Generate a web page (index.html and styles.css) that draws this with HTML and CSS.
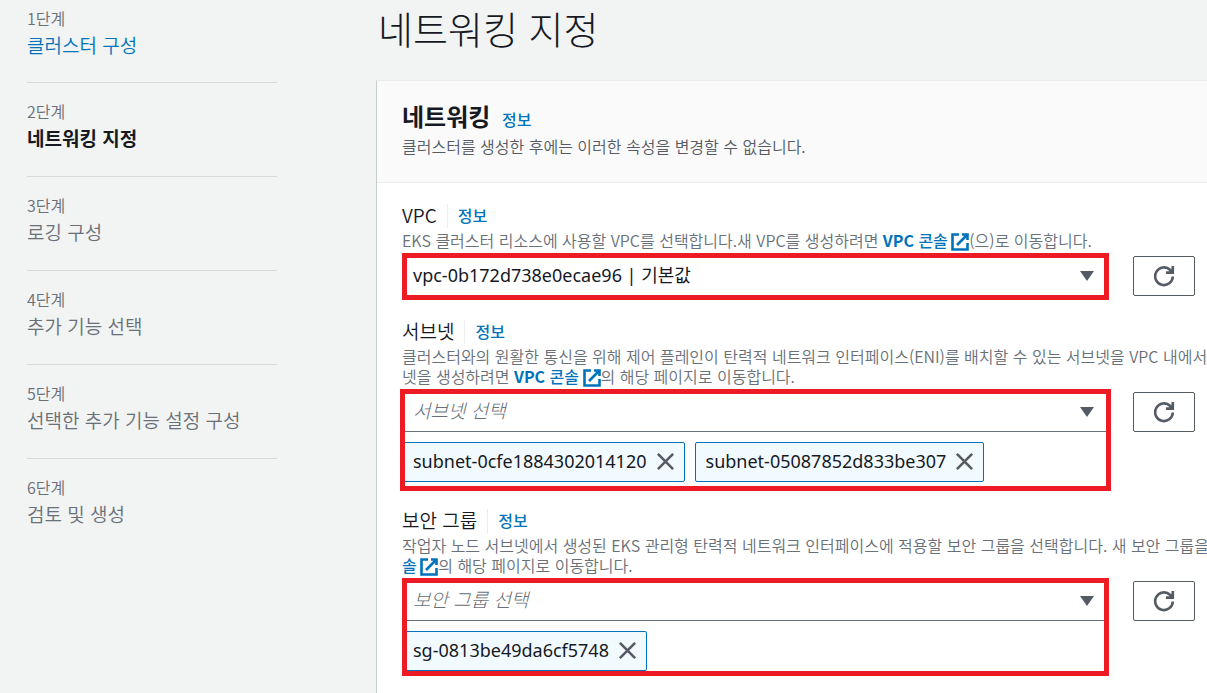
FILE: index.html
```html
<!DOCTYPE html>
<html lang="ko">
<head>
    <meta charset="UTF-8">
    <title>네트워킹 지정</title>
    <link rel="stylesheet" href="styles.css">
</head>
<body>

    <svg class="sprite" aria-hidden="true">
        <symbol id="icon-external" viewBox="0 0 18 18">
            <path d="M8 1.5H1.5v15h15V10M11 1.5h5.5V7M16 2L6 12" fill="none" stroke="currentColor" stroke-width="2.6"/>
        </symbol>
        <symbol id="icon-refresh" viewBox="0 0 22 22">
            <path d="M19.8 11.5A8.8 8.8 0 1 1 17 4.8L19 6.8M19.8 1v6.6H13" fill="none" stroke="currentColor" stroke-width="2.6"/>
        </symbol>
        <symbol id="icon-close" viewBox="0 0 16 16">
            <path d="M0.8 0.8l14.4 14.4M15.2 0.8L0.8 15.2" stroke="currentColor" stroke-width="2.4"/>
        </symbol>
    </svg>

    <div class="page">
        <!-- Wizard steps -->
        <nav>
            <ol class="steps">
                <li><small>1단계</small><a href="#">클러스터 구성</a></li>
                <li class="active"><small>2단계</small><span>네트워킹 지정</span></li>
                <li><small>3단계</small><span>로깅 구성</span></li>
                <li><small>4단계</small><span>추가 기능 선택</span></li>
                <li><small>5단계</small><span>선택한 추가 기능 설정 구성</span></li>
                <li><small>6단계</small><span>검토 및 생성</span></li>
            </ol>
        </nav>

        <main>
            <h1>네트워킹 지정</h1>

            <section class="card">
                <header class="card-header">
                    <h2>네트워킹 <a class="info" href="#">정보</a></h2>
                    <p>클러스터를 생성한 후에는 이러한 속성을 변경할 수 없습니다.</p>
                </header>

                <div class="card-body">
                    <!-- VPC -->
                    <div class="field">
                        <div class="field-label">
                            <label for="vpc">VPC</label>
                            <a class="info" href="#">정보</a>
                        </div>
                        <p class="hint">EKS 클러스터 리소스에 사용할 VPC를 선택합니다.새 VPC를 생성하려면 <a href="#"><b>VPC</b> 콘솔 <svg><use href="#icon-external"/></svg></a>(으)로 이동합니다.</p>
                        <div class="control">
                            <div class="highlight">
                                <div class="select">
                                    <select id="vpc">
                                        <option>vpc-0b172d738e0ecae96 | 기본값</option>
                                    </select>
                                </div>
                            </div>
                            <button class="refresh" type="button" aria-label="새로 고침"><svg><use href="#icon-refresh"/></svg></button>
                        </div>
                    </div>

                    <!-- Subnets -->
                    <div class="field">
                        <div class="field-label">
                            <label for="subnet">서브넷</label>
                            <a class="info" href="#">정보</a>
                        </div>
                        <p class="hint">클러스터와의 원활한 통신을 위해 제어 플레인이 탄력적 네트워크 인터페이스(ENI)를 배치할 수 있는 서브넷을 VPC 내에서<br>넷을 생성하려면 <a href="#"><b>VPC</b> 콘솔 <svg><use href="#icon-external"/></svg></a>의 해당 페이지로 이동합니다.</p>
                        <div class="control">
                            <div class="highlight wide">
                                <div class="select multi">
                                    <select id="subnet">
                                        <option>서브넷 선택</option>
                                    </select>
                                </div>
                                <div class="tokens">
                                    <span class="token">subnet-0cfe1884302014120<button type="button" aria-label="제거"><svg><use href="#icon-close"/></svg></button></span>
                                    <span class="token">subnet-05087852d833be307<button type="button" aria-label="제거"><svg><use href="#icon-close"/></svg></button></span>
                                </div>
                            </div>
                            <button class="refresh" type="button" aria-label="새로 고침"><svg><use href="#icon-refresh"/></svg></button>
                        </div>
                    </div>

                    <!-- Security groups -->
                    <div class="field">
                        <div class="field-label">
                            <label for="sg">보안 그룹</label>
                            <a class="info" href="#">정보</a>
                        </div>
                        <p class="hint">작업자 노드 서브넷에서 생성된 EKS 관리형 탄력적 네트워크 인터페이스에 적용할 보안 그룹을 선택합니다. 새 보안 그룹을<br><a href="#">솔 <svg><use href="#icon-external"/></svg></a>의 해당 페이지로 이동합니다.</p>
                        <div class="control">
                            <div class="highlight">
                                <div class="select multi">
                                    <select id="sg">
                                        <option>보안 그룹 선택</option>
                                    </select>
                                </div>
                                <div class="tokens">
                                    <span class="token">sg-0813be49da6cf5748<button type="button" aria-label="제거"><svg><use href="#icon-close"/></svg></button></span>
                                </div>
                            </div>
                            <button class="refresh" type="button" aria-label="새로 고침"><svg><use href="#icon-refresh"/></svg></button>
                        </div>
                    </div>
                </div>
            </section>
        </main>
    </div>

</body>
</html>
```
FILE: styles.css
```css
* { box-sizing: border-box; }
body {
    margin: 0;
    background: #f2f3f3;
    color: #16191f;
    font-family: "Noto Sans CJK KR", sans-serif;
    font-size: 19px;
    font-weight: 350;
    overflow: hidden;
}
h1, h2, p, ol { margin: 0; padding: 0; }
a { color: #0073bb; text-decoration: none; }
button, select { font: inherit; color: inherit; }
.sprite { display: none; }

.page { display: flex; min-height: 100vh; }

/* Steps */
nav { flex: 0 0 376px; padding: 5px 99px 0 27px; }
.steps { list-style: none; }
.steps li {
    height: 94px;
    color: #687078;
    line-height: 28px;
}
.steps li:first-child { height: 77px; }
.steps li + li { border-top: 1px solid #d5dbdb; padding-top: 15px; }
.steps small { display: block; font-size: 16px; line-height: 26px; }
.steps .active { color: #16191f; font-weight: 700; }
.steps .active small { color: #687078; font-weight: 350; }

/* Main panel */
main { flex: 1; min-width: 0; display: flex; flex-direction: column; }
h1 {
    height: 80px;
    padding-left: 2px;
    font-size: 38px;
    font-weight: 300;
    line-height: 56px;
}
.card {
    flex: 1;
    background: #fff;
    border-top: 1px solid #eaeded;
    border-left: 1px solid #c4cccc;
}
.card-header {
    height: 102px;
    padding: 18px 25px 0;
    background: #fafafa;
    border-bottom: 1px solid #eaeded;
}
h2 { font-size: 24px; font-weight: 700; line-height: 34px; }
.card-header p { color: #545b64; font-size: 16px; line-height: 20px; }
.info { font-size: 16px; font-weight: 500; }
h2 .info { margin-left: 5px; }

.card-body {
    display: flex;
    flex-direction: column;
    gap: 20px;
    padding: 21px 12px 0 25px;
}
.field-label { display: flex; align-items: center; height: 24px; }
.field-label label, .field-label .info { line-height: 22px; padding-bottom: 2px; }
.field-label .info {
    margin-left: 10px;
    padding-left: 10px;
    border-left: 1px solid #eaeded;
}
.hint {
    margin: 2px 0 3px;
    color: #687078;
    font-size: 16px;
    line-height: 20px;
    white-space: nowrap;
}
.hint a { font-weight: 500; }
.hint svg { width: 18px; height: 18px; margin: -2px 0 -2px -1px; vertical-align: -2px; }

.control { display: flex; align-items: flex-start; gap: 24px; }
.highlight {
    flex: 1;
    min-width: 0;
    border: 5px solid #ed1c24;
    overflow: hidden;
}
.highlight.wide { margin: 0 -2px -2px; padding-bottom: 4px; }

.select { position: relative; }
.select select {
    display: block;
    width: 100%;
    height: 37px;
    padding: 0 40px 4px 6px;
    border: 0;
    background: none;
    appearance: none;
    font-family: "Noto Sans", "Noto Sans CJK KR", sans-serif;
    font-size: 18px;
    font-weight: 400;
}
.select.multi select {
    height: 38px;
    padding-bottom: 6px;
    border-bottom: 1px solid #687078;
    color: #687078;
    font-family: "Noto Sans CJK KR", sans-serif;
    font-size: 19px;
    font-style: italic;
    font-weight: 300;
}
.wide .select select { padding-left: 8px; }
.select::after {
    content: "";
    position: absolute;
    top: 13px;
    right: 10px;
    border: 7px solid transparent;
    border-top: 10px solid #545b64;
    border-bottom: 0;
    pointer-events: none;
}
.wide .select::after { right: 12px; }

.tokens { display: flex; gap: 10px; margin: 10px 0 0 -5px; }
.wide .tokens { margin-left: -3px; }
.token {
    display: flex;
    align-items: center;
    gap: 10px;
    height: 40px;
    padding: 0 10px 2px;
    border: 1px solid #0073bb;
    border-radius: 2px;
    background: #f1faff;
    font-family: "Noto Sans", "Noto Sans CJK KR", sans-serif;
    font-size: 18px;
    font-weight: 400;
}
.token button { padding: 0; border: 0; background: none; color: #545b64; }
.token svg { display: block; width: 17px; height: 17px; }

.refresh {
    flex: 0 0 62px;
    height: 40px;
    margin-top: 3px;
    padding: 0;
    border: 1px solid #545b64;
    border-radius: 2px;
    background: #fff;
    color: #545b64;
}
.refresh svg { display: block; width: 22px; height: 22px; margin: 0 auto; }
```
